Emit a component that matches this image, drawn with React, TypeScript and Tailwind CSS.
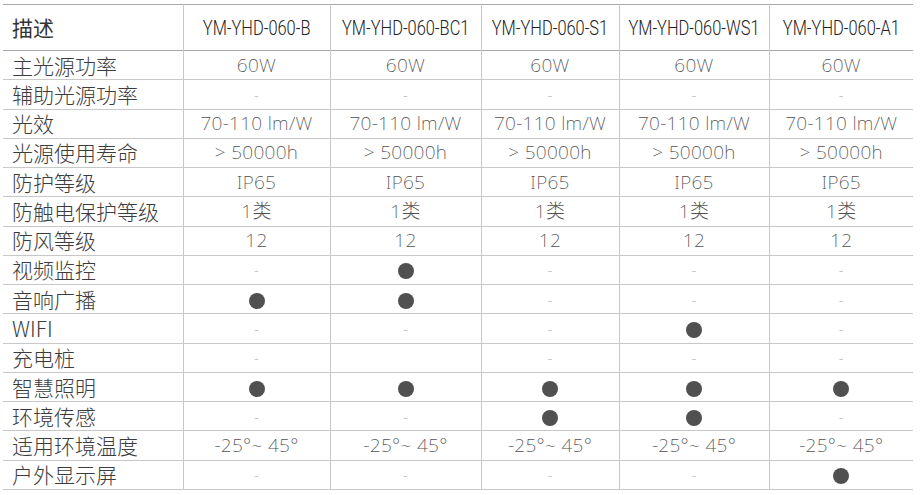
import React from 'react';

const models = ['YM-YHD-060-B', 'YM-YHD-060-BC1', 'YM-YHD-060-S1', 'YM-YHD-060-WS1', 'YM-YHD-060-A1'];

// 'o' = dot, '-' = dash, '' = empty cell
const rows: { label: string; values: string[] }[] = [
  { label: '主光源功率', values: ['60W', '60W', '60W', '60W', '60W'] },
  { label: '辅助光源功率', values: ['-', '-', '-', '-', '-'] },
  { label: '光效', values: Array(5).fill('70-110 lm/W') },
  { label: '光源使用寿命', values: Array(5).fill('> 50000h') },
  { label: '防护等级', values: Array(5).fill('IP65') },
  { label: '防触电保护等级', values: Array(5).fill('1类') },
  { label: '防风等级', values: Array(5).fill('12') },
  { label: '视频监控', values: ['-', 'o', '-', '-', '-'] },
  { label: '音响广播', values: ['o', 'o', '-', '-', '-'] },
  { label: 'WIFI', values: ['-', '-', '-', 'o', '-'] },
  { label: '充电桩', values: ['-', '', '-', '-', '-'] },
  { label: '智慧照明', values: ['o', 'o', 'o', 'o', 'o'] },
  { label: '环境传感', values: ['-', '-', 'o', 'o', '-'] },
  { label: '适用环境温度', values: Array(5).fill('-25°~ 45°') },
  { label: '户外显示屏', values: ['-', '-', '-', '-', 'o'] },
];

const colWidths = ['w-[180px]', 'w-[147px]', 'w-[151px]', 'w-[138px]', 'w-[150px]', 'w-[144px]'];

const Cell: React.FC<{ value: string }> = ({ value }) => {
  if (value === 'o') {
    return <span className="inline-block w-[16px] h-[16px] rounded-full bg-[#505050] align-middle" />;
  }
  if (value === '-') {
    return <span className="text-[#a0a0a0] text-[15px]">-</span>;
  }
  return <span>{value}</span>;
};

export default function App() {
  return (
    <div className="w-[920px] h-[495px] bg-white pt-[4px] pl-[3px]">
      <table className="table-fixed border-collapse w-[910px] font-['Noto_Sans','Noto_Sans_CJK_SC',sans-serif]">
        <colgroup>
          {colWidths.map((w, i) => (
            <col key={i} className={w} />
          ))}
        </colgroup>
        <thead>
          <tr className="h-[46px] border-t border-t-[#a8a8a8] border-b border-b-[#a8a8a8]">
            <th className="text-left pl-[9px] font-normal text-[21px] text-[#333] font-['Noto_Sans_CJK_SC',sans-serif]">描述</th>
            {models.map((m) => (
              <th
                key={m}
                className="border-l border-l-[#c8c8c8] font-light text-[20px] text-[#222] font-['Roboto',sans-serif]"
              >
                <div className="flex justify-center">
                  <span className="shrink-0 whitespace-nowrap scale-x-[0.82]">{m}</span>
                </div>
              </th>
            ))}
          </tr>
        </thead>
        <tbody>
          {rows.map((r) => (
            <tr key={r.label} className="h-[29.27px] border-b border-b-[#c8c8c8]">
              <td className="pl-[9px] text-[21px] leading-none font-light text-[#3c3c3c] font-['Noto_Sans_CJK_SC',sans-serif]">
                {r.label}
              </td>
              {r.values.map((v, i) => (
                <td
                  key={i}
                  className="border-l border-l-[#c8c8c8] text-center text-[19px] leading-none font-extralight text-[#505050] tracking-[0.3px]"
                >
                  <Cell value={v} />
                </td>
              ))}
            </tr>
          ))}
        </tbody>
      </table>
    </div>
  );
}
